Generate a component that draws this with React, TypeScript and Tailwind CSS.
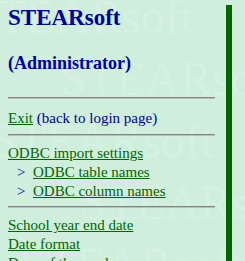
import React from "react";

const serif = { fontFamily: '"Liberation Serif", "Times New Roman", serif' };

function Rule() {
  return <div className="h-[2px] w-[207px] border-t border-t-[#858585] border-b border-b-[#b4c2b9]" />;
}

function Sub({ children }: { children: React.ReactNode }) {
  return (
    <div className="flex">
      <span className="w-[25px] pl-[9px] text-[#0000a0]">&gt;</span>
      <a className="text-[#006600] underline">{children}</a>
    </div>
  );
}

export default function App() {
  return (
    <div
      className="relative w-[245px] h-[261px] overflow-hidden bg-[#cfeedc]"
      style={serif}
    >
      <div className="pointer-events-none absolute inset-0 select-none text-[48px] font-normal leading-[62px] text-[#d6f1e2]">
        <div className="-ml-[30px] mt-[-14px]">STEARsoft</div>
        <div className="ml-[60px]">STEARsoft</div>
        <div className="-ml-[10px]">STEARsoft</div>
        <div className="ml-[80px]">STEARsoft</div>
        <div className="ml-[20px]">STEARsoft</div>
      </div>
      <div className="relative flex">
        <div className="w-[207px] ml-[8px] text-[15px] leading-[19px]">
          <div className="mt-[4px] text-[23px] font-bold leading-[28px] text-[#0000a0]">STEARsoft</div>
          <div className="mt-[21px] text-[18px] font-bold leading-[20px] text-[#0000a0]">(Administrator)</div>
          <div className="mt-[24px]"><Rule /></div>
          <div className="mt-[10px]">
            <a className="text-[#006600] underline">Exit</a>
            <span className="text-[#0000a0]"> (back to login page)</span>
          </div>
          <div className="mt-[6px]"><Rule /></div>
          <div className="mt-[8px]">
            <a className="text-[#006600] underline">ODBC import settings</a>
          </div>
          <Sub>ODBC table names</Sub>
          <Sub>ODBC column names</Sub>
          <div className="mt-[5px]"><Rule /></div>
          <div className="mt-[8px] flex flex-col items-start">
            <a className="text-[#006600] underline">School year end date</a>
            <a className="text-[#006600] underline">Date format</a>
            <a className="text-[#006600] underline">Days of the week</a>
          </div>
        </div>
        <div className="ml-[11px] mt-[5px] w-[6px] h-[256px] bg-[#006600]" />
      </div>
    </div>
  );
}
